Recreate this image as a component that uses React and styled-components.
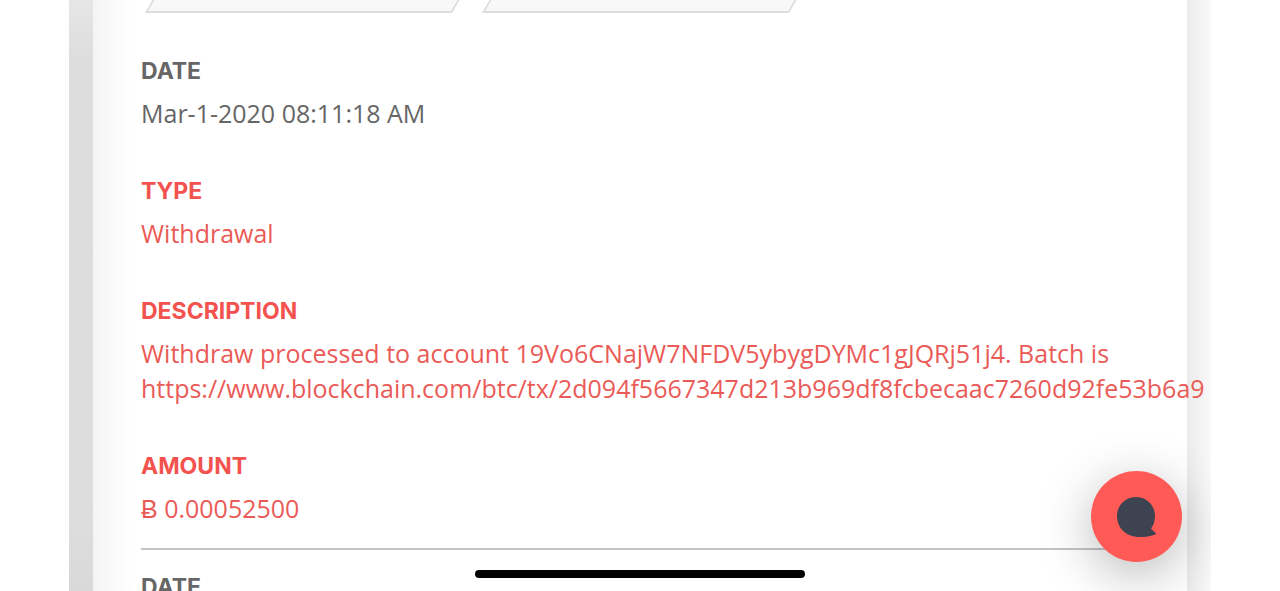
import React from "react";
import styled, { createGlobalStyle } from "styled-components";

const GlobalStyle = createGlobalStyle`
  body {
    margin: 0;
    background: #fff;
    font-family: "Open Sans", sans-serif;
  }
`;

const Page = styled.div`
  height: 100vh;
  overflow: hidden;
  padding: 0 69px;
`;

const Screen = styled.main`
  position: relative;
  display: flex;
  height: 100%;
  overflow: hidden;
`;

const Edge = styled.div`
  flex: 0 0 24px;
  background: linear-gradient(#e6e6e6, #dddddd 60px, #dddddd 520px, #d9d9d9);
`;

const EdgeRight = styled.div`
  flex: 0 0 24px;
  background: linear-gradient(to right, #ebebeb, #f9f9f9);
`;

const Card = styled.section`
  position: relative;
  z-index: 1;
  flex: 1;
  min-width: 0;
  padding: 0 47px 0 48px;
  background: linear-gradient(to right, #f4f4f4, #fff 40px);
`;

const Tabs = styled.nav`
  display: flex;
  align-items: flex-end;
  gap: 30px;
  height: 13px;
  padding-left: 4px;
  overflow: hidden;
`;

const Tab = styled.button`
  position: relative;
  z-index: 0;
  display: flex;
  flex: none;
  align-items: flex-end;
  box-sizing: border-box;
  width: 307px;
  height: 64px;
  padding: 0 0 5px 78px;
  border: 0;
  background: none;
  color: #666;
  font-family: inherit;
  font-size: 25px;
  line-height: 35px;

  &::before {
    content: "";
    position: absolute;
    inset: 0;
    z-index: -1;
    box-sizing: border-box;
    border: 2px solid #dedede;
    background: #f8f8f8;
    transform: skewX(-30deg);
    transform-origin: bottom;
  }
`;

const Record = styled.dl`
  display: flex;
  flex-direction: column;
  gap: 47px;
  margin: 0;
  padding: ${(props) => (props.$first ? "45px" : "24px")} 0 22px;
  border-bottom: 2px solid #c4c4c4;
`;

const Field = styled.div`
  color: ${(props) => (props.$red ? "#ea5b57" : "#666")};
`;

const Label = styled.dt`
  margin-bottom: 11px;
  color: ${(props) => (props.$red ? "#f3524f" : "#666")};
  font-family: Inter, sans-serif;
  font-size: 23px;
  font-weight: 700;
  line-height: 27px;
`;

const Value = styled.dd`
  margin: 0;
  font-size: 25px;
  line-height: 35px;
`;

const ChatButton = styled.button`
  position: absolute;
  z-index: 2;
  right: 29px;
  bottom: 29px;
  width: 91px;
  height: 91px;
  padding: 0;
  border: 0;
  border-radius: 50%;
  background: #ff5a56;
  box-shadow: 0 12px 52px rgba(0, 0, 0, 0.28);

  svg {
    display: block;
  }
`;

const HomeBar = styled.div`
  position: absolute;
  z-index: 2;
  bottom: 13px;
  left: 50%;
  width: 330px;
  height: 8px;
  border-radius: 4px;
  background: #000;
  transform: translateX(-50%);
`;

const transaction = [
  { label: "DATE", value: "Mar-1-2020 08:11:18 AM" },
  { label: "TYPE", value: "Withdrawal", red: true },
  {
    label: "DESCRIPTION",
    value:
      "Withdraw processed to account 19Vo6CNajW7NFDV5ybygDYMc1gJQRj51j4. Batch is https://www.blockchain.com/btc/tx/2d094f5667347d213b969df8fcbecaac7260d92fe53b6a9",
    red: true,
  },
  { label: "AMOUNT", value: "Ƀ 0.00052500", red: true },
];

const App = () => {
  return (
    <Page>
      <GlobalStyle />
      <Screen>
        <Edge />
        <Card>
          <Tabs>
            <Tab>Account</Tab>
            <Tab>eCurrencies</Tab>
          </Tabs>
          <Record $first>
            {transaction.map((field) => (
              <Field key={field.label} $red={field.red}>
                <Label $red={field.red}>{field.label}</Label>
                <Value>{field.value}</Value>
              </Field>
            ))}
          </Record>
          <Record>
            <Field>
              <Label>DATE</Label>
            </Field>
          </Record>
        </Card>
        <EdgeRight />
        <ChatButton aria-label="Open chat">
          <svg width="91" height="91" viewBox="0 0 91 91">
            <path
              d="M45 26C34.300 26 26 34.500 26 45C26 57.500 36 66 48.500 66C54 66 60 65.500 65.500 63L60 57.500C62.800 54 64 50 64 45C64 34.500 55.700 26 45 26Z"
              fill="#3d4350"
            />
          </svg>
        </ChatButton>
        <HomeBar />
      </Screen>
    </Page>
  );
};

export default App;
